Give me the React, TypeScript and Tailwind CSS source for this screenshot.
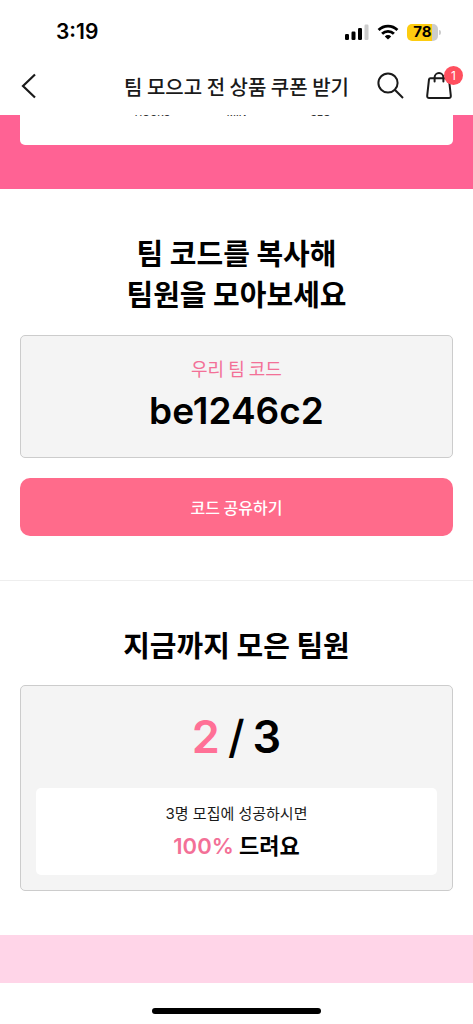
function StatusBar() {
  return (
    <div className="flex h-14 items-end justify-between pl-14 pr-8">
      <span className="flex h-12 items-center text-[21px] font-semibold text-black">3:19</span>
      <div className="flex h-12 items-center gap-2">
        <svg width="24" height="16" viewBox="0 0 24 16" aria-label="Signal">
          <rect x="0" y="10" width="4" height="6" rx="1.2" />
          <rect x="6.5" y="7.5" width="4" height="8.5" rx="1.2" />
          <rect x="13" y="4" width="4" height="12" rx="1.2" />
          <rect x="19.5" y="0.5" width="4" height="15.5" rx="1.2" fill="#cccccc" />
        </svg>
        <svg width="22" height="16" viewBox="0 0 22 16" fill="none" stroke="#000" strokeWidth="2.8" aria-label="Wi-Fi">
          <path d="M1.6 6.1a13.2 13.2 0 0 1 18.8 0" />
          <path d="M5.1 9.8a8.3 8.3 0 0 1 11.8 0" />
          <path d="M11 15.6 7.8 12.4a4.5 4.5 0 0 1 6.4 0Z" fill="#000" stroke="none" />
        </svg>
        <div className="flex items-center gap-px">
          <div className="flex h-[17px] w-[31px] items-center justify-center rounded-[5px] bg-linear-to-r from-[#fdcc10] from-80% to-[#cccccc] to-80% text-[15px] font-bold text-black">
            78
          </div>
          <div className="h-[5px] w-[2px] rounded-r-full bg-[#cccccc]" />
        </div>
      </div>
    </div>
  );
}

function Header() {
  return (
    <div className="grid h-[59px] grid-cols-[96px_1fr_96px] items-center">
      <button aria-label="뒤로" className="ml-[21px] w-4">
        <svg width="16" height="26" viewBox="0 0 16 26" fill="none" stroke="#1a1a1a" strokeWidth="2.2">
          <path d="M14 1.5 2 13l12 11.5" />
        </svg>
      </button>
      <h1 className="pt-[3px] text-center font-['Noto_Sans_CJK_KR',sans-serif] text-[20px] leading-[28px] font-medium whitespace-nowrap text-[#1a1a1a]">
        팀 모으고 전 상품 쿠폰 받기
      </h1>
      <div className="flex items-center gap-[22px]">
        <button aria-label="검색">
          <svg width="27" height="27" viewBox="0 0 27 27" fill="none" stroke="#1a1a1a" strokeWidth="2">
            <circle cx="11" cy="11" r="9.6" />
            <path d="m17.8 17.8 8.2 8.2" />
          </svg>
        </button>
        <button aria-label="장바구니" className="relative">
          <svg width="26" height="27" viewBox="0 0 26 27" fill="none" stroke="#1a1a1a" strokeWidth="2" strokeLinecap="round" strokeLinejoin="round">
            <path d="M4.4 6.2H21.6Q22.8 6.2 23 7.4L24.8 23.6Q25 26 22.8 26H3.2Q1 26 1.2 23.6L3 7.4Q3.2 6.2 4.4 6.2Z" />
            <path d="M8.6 9.5V5.5a4.4 4.4 0 0 1 8.8 0V9.5" />
          </svg>
          <span className="absolute -top-[6px] left-[18px] flex size-[19px] items-center justify-center rounded-full bg-[#ff4f5e] text-[12px] text-white">
            1
          </span>
        </button>
      </div>
    </div>
  );
}

// Scrolled up so that its labels are mostly behind the sticky header
function CountdownCard() {
  return (
    <section className="-mt-4 bg-[#ff6294] px-5 pb-11">
      <div className="h-[46px] rounded-b-[5px] bg-white pt-[5px]">
        <div className="mx-auto grid w-[252px] grid-cols-3 text-center text-[10px] leading-[16px] font-medium text-[#333333]">
          <span>HOURS</span>
          <span>MIN</span>
          <span>SEC</span>
        </div>
      </div>
    </section>
  );
}

function TeamCode() {
  return (
    <section className="px-5 pt-[43px] pb-11">
      <h2 className="text-center font-['Noto_Sans_CJK_KR',sans-serif] text-[29px] leading-[41px] font-bold text-black">
        팀 코드를 복사해
        <br />
        팀원을 모아보세요
      </h2>
      <div className="mt-[21px] flex flex-col items-center rounded-[5px] border border-[#cccccc] bg-[#f4f4f4] pt-[19px] pb-[21px] text-center">
        <p className="font-['Noto_Sans_CJK_KR',sans-serif] text-[18px] leading-[26px] text-[#f37097]">우리 팀 코드</p>
        <p className="mt-[5px] text-[37px] leading-[50px] font-semibold text-black">be1246c2</p>
      </div>
      <button className="mt-5 h-[58px] w-full rounded-[10px] bg-[#ff6b8b] font-['Noto_Sans_CJK_KR',sans-serif] text-[16px] font-medium text-white">
        코드 공유하기
      </button>
    </section>
  );
}

function TeamMembers({ joined, total }: { joined: number; total: number }) {
  return (
    <section className="border-t border-[#eeeeee] px-5 pt-[43px] pb-11">
      <h2 className="text-center font-['Noto_Sans_CJK_KR',sans-serif] text-[29px] leading-[41px] font-bold text-black">
        지금까지 모은 팀원
      </h2>
      <div className="mt-5 rounded-[5px] border border-[#cccccc] bg-[#f4f4f4] px-[15px] pt-6 pb-[15px] text-center">
        <p className="flex justify-center gap-2 text-[45px] leading-[54px] font-semibold text-black">
          <span className="text-[#ff7096]">{joined}</span>
          <span className="font-medium">/</span>
          <span>{total}</span>
        </p>
        <div className="mt-6 rounded-[5px] bg-white pt-3 pb-[11px]">
          <p className="text-[15px] leading-[28px] text-[#1a1a1a]">{total}명 모집에 성공하시면</p>
          <p className="text-[22px] leading-[36px] font-bold text-black">
            <span className="font-semibold text-[#f37097]">100%</span> 드려요
          </p>
        </div>
      </div>
    </section>
  );
}

export default function App() {
  return (
    <div className="bg-white font-['Inter','Noto_Sans_CJK_KR',sans-serif]">
      <header className="sticky top-0 z-10 bg-white">
        <StatusBar />
        <Header />
      </header>
      <main>
        <CountdownCard />
        <TeamCode />
        <TeamMembers joined={2} total={3} />
        <div className="h-12 bg-[#ffd5e8]" />
      </main>
      <div className="flex h-[41px] justify-center pt-[25px]">
        <div className="h-[6px] w-[169px] rounded-full bg-black" />
      </div>
    </div>
  );
}
